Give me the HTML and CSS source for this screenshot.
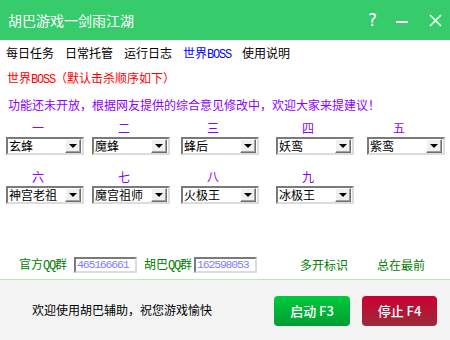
FILE: index.html
```html
<!DOCTYPE html>
<html lang="zh-CN">
<head>
<meta charset="utf-8">
<title>胡巴游戏一剑雨江湖</title>
<link rel="stylesheet" href="styles.css">
</head>
<body>
<div class="window">
  <header class="titlebar">
    <div class="title">胡巴游戏一剑雨江湖</div>
    <div class="controls">
      <span class="ctl help">?</span>
      <svg class="ctl" width="12" height="12" viewBox="0 0 12 12"><rect x="0" y="7" width="12" height="2" fill="#fff"/></svg>
      <svg class="ctl" width="13" height="13" viewBox="0 0 13 13"><path d="M1 1 L12 12 M12 1 L1 12" stroke="#fff" stroke-width="1.6" fill="none"/></svg>
    </div>
  </header>
  <main class="main">
    <nav class="tabs">
      <span class="tab">每日任务</span>
      <span class="tab">日常托管</span>
      <span class="tab">运行日志</span>
      <span class="tab active">世界<span class="en">BOSS</span></span>
      <span class="tab">使用说明</span>
    </nav>
    <div class="note-red">世界<span class="en">BOSS</span>（默认击杀顺序如下）</div>
    <div class="note-purple">功能还未开放，根据网友提供的综合意见修改中，欢迎大家来提建议！</div>
    <div class="grid">
      <div class="cell"><div class="num">一</div><div class="combo"><span class="val">玄蜂</span><span class="drop"></span></div></div>
      <div class="cell"><div class="num">二</div><div class="combo"><span class="val">魔蜂</span><span class="drop"></span></div></div>
      <div class="cell"><div class="num">三</div><div class="combo"><span class="val">蜂后</span><span class="drop"></span></div></div>
      <div class="cell"><div class="num">四</div><div class="combo"><span class="val">妖鸾</span><span class="drop"></span></div></div>
      <div class="cell"><div class="num">五</div><div class="combo"><span class="val">紫鸾</span><span class="drop"></span></div></div>
      <div class="cell"><div class="num">六</div><div class="combo"><span class="val">神宫老祖</span><span class="drop"></span></div></div>
      <div class="cell"><div class="num">七</div><div class="combo"><span class="val">魔宫祖师</span><span class="drop"></span></div></div>
      <div class="cell"><div class="num">八</div><div class="combo"><span class="val">火极王</span><span class="drop"></span></div></div>
      <div class="cell"><div class="num">九</div><div class="combo"><span class="val">冰极王</span><span class="drop"></span></div></div>
    </div>
    <div class="qqrow">
      <span class="lbl l1">官方<span class="en">QQ</span>群</span>
      <span class="qq q1">465166661</span>
      <span class="lbl l2">胡巴<span class="en">QQ</span>群</span>
      <span class="qq q2">162598053</span>
      <span class="lbl l3">多开标识</span>
      <span class="lbl l4">总在最前</span>
    </div>
  </main>
  <footer class="footer">
    <div class="welcome">欢迎使用胡巴辅助，祝您游戏愉快</div>
    <div class="buttons">
      <button class="btn start">启动 F3</button>
      <button class="btn stop">停止 F4</button>
    </div>
  </footer>
</div>
</body>
</html>
```
FILE: styles.css
```css
* { box-sizing: border-box; }
html, body { margin: 0; padding: 0; background: #fff; }
body {
  font-family: "Noto Sans CJK SC", "Noto Sans", sans-serif;
  font-size: 12px;
  line-height: 12px;
  color: #000;
}
.window { width: 450px; height: 340px; display: flex; flex-direction: column; overflow: hidden; }

.titlebar {
  height: 40px;
  background: #36cc6c;
  display: flex;
  align-items: center;
  justify-content: space-between;
  padding: 0 8px 0 8px;
  color: #fff;
  flex: none;
}
.title { font-size: 14px; line-height: 14px; letter-spacing: 0; }
.controls { display: flex; align-items: center; gap: 0; }
.ctl { display: block; }
.help { font-family: "DejaVu Sans", sans-serif; font-size: 17px; line-height: 17px; margin-right: 19px; }
.controls svg:nth-child(2) { margin-right: 21px; }

.main { height: 239px; display: flex; flex-direction: column; flex: none; }

.en { font-family: "Liberation Mono", monospace; font-size: 12px; letter-spacing: -1.2px; }

.tabs { display: flex; gap: 11px; padding-left: 6px; margin-top: 7px; height: 12px; }
.tab { white-space: nowrap; }
.tab.active { color: #0000ff; }

.note-red { color: #ff0000; margin-top: 13px; padding-left: 7px; height: 12px; }
.note-purple { color: #8b00ff; margin-top: 15px; padding-left: 8px; height: 12px; }

.grid {
  display: grid;
  grid-template-columns: 86px 89px 95px 91px 80px;
  row-gap: 16px;
  padding-left: 6px;
  margin-top: 11px;
}
.cell { display: flex; flex-direction: column; }
.num { width: 64px; text-align: center; color: #8b00ff; height: 12px; }
.combo {
  margin-top: 3px;
  width: 78px;
  height: 18px;
  border: 2px solid;
  border-color: #7a7a7a #dcdcdc #dcdcdc #7a7a7a;
  background: #fff;
  display: flex;
  align-items: center;
  justify-content: space-between;
  padding: 0 1px 0 1px;
}
.val { white-space: nowrap; line-height: 12px; }
.drop {
  width: 16px;
  height: 14px;
  background: #f0f0f0;
  border: 1px solid;
  border-color: #ffffff #6e6e6e #6e6e6e #ffffff;
  box-shadow: inset -1px -1px 0 #a0a0a0;
  position: relative;
}
.drop::after {
  content: "";
  position: absolute;
  left: 3px;
  top: 4px;
  border-left: 4px solid transparent;
  border-right: 4px solid transparent;
  border-top: 4px solid #000;
}

.qqrow { margin-top: auto; margin-bottom: 6px; display: flex; align-items: center; height: 16px; color: #008000; }
.lbl { white-space: nowrap; }
.l1 { margin-left: 19px; }
.q1 { margin-left: 7px; }
.l2 { margin-left: 7px; }
.q2 { margin-left: 2px; }
.l3 { margin-left: 43px; }
.l4 { margin-left: 29px; }
.qq {
  width: 63px;
  height: 16px;
  border: 2px solid;
  border-color: #7a7a7a #dcdcdc #dcdcdc #7a7a7a;
  color: #8080ff;
  font-family: "Liberation Mono", monospace;
  font-size: 11.5px;
  letter-spacing: -1.2px;
  line-height: 12px;
  padding-left: 1px;
  display: flex;
  align-items: center;
  overflow: hidden;
}

.footer {
  height: 61px;
  flex: none;
  border-top: 1px solid #b2f0a4;
  background: #f3f3f3;
  display: flex;
  align-items: center;
  justify-content: space-between;
  padding: 0 13px 0 32px;
}
.welcome { white-space: nowrap; }
.buttons { display: flex; gap: 12px; margin-top: 1px; }
.btn {
  width: 76px;
  height: 30px;
  border: none;
  border-radius: 4px;
  color: #fff;
  font-family: "Noto Sans CJK SC", sans-serif;
  font-size: 13px;
  line-height: 13px;
  font-weight: 500;
  padding: 0;
}
.start { background: linear-gradient(#00c93c, #009f30); }
.stop { width: 75px; background: linear-gradient(#cc0032, #9d2a38); }
```
